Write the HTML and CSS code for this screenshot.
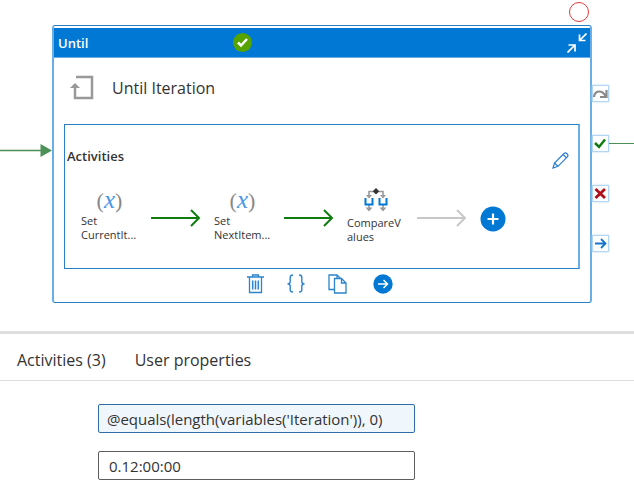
FILE: index.html
```html
<!DOCTYPE html>
<html lang="en">
<head>
  <meta charset="UTF-8">
  <meta name="viewport" content="width=device-width, initial-scale=1.0">
  <title>Until Iteration</title>
  <link rel="stylesheet" href="styles.css">
</head>
<body>
  <main class="canvas">
    <svg class="connector-in" width="52" height="14" viewBox="0 0 52 14">
      <path d="M0 6.500H42" stroke="#4c8f56" stroke-width="1.500"/>
      <path d="M40.500 0L52 6.500L40.500 13Z" fill="#4c9158"/>
    </svg>

    <section class="node">
      <header class="node-header">
        <span class="node-type">Until</span>
        <svg width="19" height="19" viewBox="0 0 19 19">
          <circle cx="9.500" cy="9.500" r="9.500" fill="#57a300"/>
          <path d="M5 9.500L8 12.500L14 6" fill="none" stroke="#fff" stroke-width="2.500"/>
        </svg>
        <button class="icon-button collapse" aria-label="Collapse">
          <svg width="20" height="20" viewBox="0 0 20 20" fill="none" stroke="#fff" stroke-width="1.700">
            <path d="M19.500 .5L13 7M12.500 1.500V7.500H18.500"/>
            <path d="M.5 19.500L7.500 12.500M1.500 12H8V18.500"/>
          </svg>
        </button>
        <span class="breakpoint"></span>
      </header>

      <div class="node-title">
        <svg width="24" height="25" viewBox="0 0 24 25">
          <path d="M6 2H22V23H5V10" fill="none" stroke="#999" stroke-width="2.500"/>
          <path d="M0 13L5 8L10 13Z" fill="#999"/>
        </svg>
        <span>Until Iteration</span>
      </div>

      <div class="activities">
        <div class="activities-header">
          <h2>Activities</h2>
          <button class="icon-button" aria-label="Edit activities">
            <svg width="17" height="17" viewBox="0 0 17 17" fill="none" stroke="#2b7fd0" stroke-width="1.200">
              <path d="M1 16L2.500 11L12 1.500Q13.500 .3 15 1.700Q16.700 3.300 15.300 4.900L6 14.300Z"/>
              <path d="M2.500 11L6 14.300M11 2.500L14.500 5.800"/>
            </svg>
          </button>
        </div>

        <div class="flow">
          <div class="activity">
            <div class="variable">(<i>x</i>)</div>
            <div class="activity-name">Set CurrentIt...</div>
          </div>
          <svg class="arrow" width="50" height="18" viewBox="0 0 50 18">
            <path d="M0 9H48M40 1L48 9L40 17"/>
          </svg>
          <div class="activity">
            <div class="variable">(<i>x</i>)</div>
            <div class="activity-name">Set NextItem...</div>
          </div>
          <svg class="arrow" width="50" height="18" viewBox="0 0 50 18">
            <path d="M0 9H48M40 1L48 9L40 17"/>
          </svg>
          <div class="activity">
            <svg class="condition" width="24" height="24" viewBox="0 0 24 24">
              <path d="M5 8V3.500H19V8M5 17V21M19 17V21" fill="none" stroke="#999" stroke-width="1.600"/>
              <path d="M2 7H8L5 10.500ZM16 7H22L19 10.500ZM1.500 19.500H8.500L5 23.500ZM15.500 19.500H22.500L19 23.500Z" fill="#999"/>
              <path d="M1.500 10V16.500H8.500V10M15.500 10V16.500H22.500V10" fill="none" stroke="#0078d4" stroke-width="2"/>
              <path d="M12 0L15.200 3.300L12 6.500L8.800 3.300Z" fill="#333"/>
            </svg>
            <div class="activity-name">CompareValues</div>
          </div>
          <svg class="arrow pending" width="50" height="18" viewBox="0 0 50 18">
            <path d="M0 9H48M40 1L48 9L40 17"/>
          </svg>
          <button class="icon-button add" aria-label="Add activity">
            <svg width="26" height="26" viewBox="0 0 26 26">
              <circle cx="13" cy="13" r="12.500" fill="#0078d4"/>
              <path d="M13 7.500V18.500M7.500 13H18.500" stroke="#fff" stroke-width="2.200"/>
            </svg>
          </button>
        </div>
      </div>

      <div class="toolbar">
        <button class="icon-button" aria-label="Delete">
          <svg width="17" height="20" viewBox="0 0 17 20" fill="none" stroke="#2b84cc" stroke-width="1.300">
            <path d="M0 3H17M5.500 3V1H11.500V3M2.500 3V18.500H14.500V3"/>
            <path d="M5.700 6.500V15.500M8.500 6.500V15.500M11.300 6.500V15.500" stroke-width="1.500"/>
          </svg>
        </button>
        <button class="icon-button" aria-label="Code">
          <svg width="18" height="20" viewBox="0 0 18 20" fill="none" stroke="#2b84cc" stroke-width="1.400">
            <path d="M6 1Q3.200 1 3.200 3.500V7.500Q3.200 9.700 .5 9.700Q3.200 9.700 3.200 12V15.700Q3.200 18 6 18"/>
            <path d="M12 1Q14.800 1 14.800 3.500V7.500Q14.800 9.700 17.500 9.700Q14.800 9.700 14.800 12V15.700Q14.800 18 12 18"/>
          </svg>
        </button>
        <button class="icon-button" aria-label="Copy">
          <svg width="19" height="20" viewBox="0 0 19 20" fill="none" stroke="#2b84cc" stroke-width="1.300">
            <path d="M6 15.500H1V1H9L12.500 4.500M9 1V4.500"/>
            <path d="M6.500 4.500H13.500L18 9V19H6.500ZM13.500 4.500V9H18"/>
          </svg>
        </button>
        <button class="icon-button run" aria-label="Run">
          <svg width="20" height="20" viewBox="0 0 20 20">
            <circle cx="10" cy="10" r="9.700" fill="#0078d4"/>
            <path d="M5 10H14.500M10.500 6L14.500 10L10.500 14" fill="none" stroke="#fff" stroke-width="1.500"/>
          </svg>
        </button>
      </div>
    </section>

    <div class="ports">
      <button class="port" aria-label="On skip">
        <svg width="15" height="15" viewBox="0 0 15 15" fill="none" stroke="#8a8a8a" stroke-width="2.200">
          <path d="M1 11Q1.500 5.500 6.500 5.500Q10 5.500 12.500 10M13.500 4V11H7"/>
        </svg>
      </button>
      <button class="port" aria-label="On success">
        <svg width="15" height="15" viewBox="0 0 15 15" fill="none" stroke="#107c10" stroke-width="2.500">
          <path d="M2 7L6 11L12 3.500"/>
        </svg>
      </button>
      <button class="port" aria-label="On failure">
        <svg width="15" height="15" viewBox="0 0 15 15" fill="none" stroke="#b10e1c" stroke-width="2.800">
          <path d="M2.500 3L12 12M12 3L2.500 12"/>
        </svg>
      </button>
      <button class="port" aria-label="On completion">
        <svg width="15" height="15" viewBox="0 0 15 15" fill="none" stroke="#1874cd" stroke-width="1.800">
          <path d="M2 7.500H12.500M8 3L12.500 7.500L8 12"/>
        </svg>
      </button>
    </div>
    <div class="connector-out"></div>
  </main>

  <section class="details">
    <nav class="tabs">
      <a href="#activities">Activities (3)</a>
      <a href="#properties">User properties</a>
    </nav>
    <form class="settings">
      <input class="expression" type="text" aria-label="Expression" value="@equals(length(variables('Iteration')), 0)">
      <input type="text" aria-label="Timeout" value="0.12:00:00">
    </form>
  </section>
</body>
</html>
```
FILE: styles.css
```css
* {
  box-sizing: border-box;
}

body {
  margin: 0;
  font-family: "Open Sans", "Noto Sans", sans-serif;
  font-size: 16px;
  color: #333;
  background: #fff;
}

svg {
  display: block;
  flex: none;
}

.icon-button {
  padding: 0;
  border: none;
  background: none;
  cursor: pointer;
}

.canvas {
  display: flex;
  align-items: flex-start;
  padding: 25px 0 28px;
}

.connector-in {
  margin-top: 119px;
}

.connector-out {
  width: 25px;
  margin-top: 118px;
  border-top: 1px solid #4c8f56;
}

.node {
  flex: 1;
  min-width: 0;
  border: 1px solid #2b7fc4;
  border-right: 2px solid #69aee8;
  border-left: 2px solid #69aee8;
  border-radius: 3px;
}

.node-header {
  position: relative;
  display: flex;
  align-items: center;
  height: 30px;
  margin-top: 2px;
  padding: 0 3px 0 4px;
  color: #fff;
  background: #0078d4;
  border-bottom: 1px solid #69aee8;
}

.node-type {
  flex: 0 0 33%;
  font-size: 13px;
  font-weight: 600;
}

.collapse {
  margin-left: auto;
}

.breakpoint {
  position: absolute;
  top: -26px;
  right: 1px;
  width: 20px;
  height: 20px;
  border: 1px solid #e03c3c;
  border-radius: 50%;
}

.node-title {
  display: flex;
  align-items: center;
  gap: 18px;
  height: 66px;
  padding: 0 16px 7px;
}

.activities {
  height: 145px;
  margin: 0 10px;
  padding: 22px 9px 0 2px;
  border: 1px solid #2b7fc4;
  border-right: 2px solid #69aee8;
}

.activities-header {
  display: flex;
  align-items: flex-start;
  justify-content: space-between;
}

.activities-header h2 {
  margin: 0;
  font-size: 13px;
  font-weight: 600;
  line-height: 18px;
}

.activities-header .icon-button {
  margin-top: 5px;
}

.flow {
  display: flex;
  align-items: flex-start;
  gap: 13px;
  padding: 18px 0 0 14px;
}

.activity {
  width: 57px;
}

.variable {
  font-family: "Liberation Serif", serif;
  font-size: 22px;
  line-height: 26px;
  text-align: center;
  color: #888;
}

.variable i {
  font-size: 25px;
  color: #4a98ea;
}

.activity-name {
  font-size: 11px;
  line-height: 14px;
  overflow-wrap: anywhere;
}

.condition {
  margin: 1px auto 4px;
}

.arrow {
  margin-top: 22px;
  fill: none;
  stroke: #107c10;
  stroke-width: 2;
}

.pending {
  stroke: #c8c8c8;
}

.add {
  margin-top: 19px;
}

.toolbar {
  display: flex;
  align-items: center;
  justify-content: center;
  gap: 23px;
  height: 33px;
  padding: 0 4px 3px 0;
}

.run {
  margin-left: 3px;
}

.ports {
  display: flex;
  flex-direction: column;
  gap: 33px;
  padding-top: 60px;
}

.port {
  width: 17px;
  height: 17px;
  padding: 0;
  border: 1px solid #b5d6f2;
  background: #fff;
  box-shadow: 0 0 2px #b5d6f2;
  cursor: pointer;
}

.details {
  border-top: 3px solid #dedede;
}

.tabs {
  display: flex;
  gap: 29px;
  height: 47px;
  padding: 0 17px;
  line-height: 52px;
  border-bottom: 1px solid #dedede;
}

.tabs a {
  color: #333;
  text-decoration: none;
}

.settings {
  display: flex;
  flex-direction: column;
  gap: 18px;
  padding: 23px 0 6px 98px;
}

.settings input {
  width: 317px;
  max-width: 100%;
  height: 29px;
  padding: 0 10px;
  font-family: inherit;
  font-size: 15px;
  color: #333;
  border: 1px solid #605e5c;
  border-radius: 2px;
}

.settings .expression {
  padding: 0 8px;
  background: #eff6fc;
  border-color: #2f6ca8;
}
```
